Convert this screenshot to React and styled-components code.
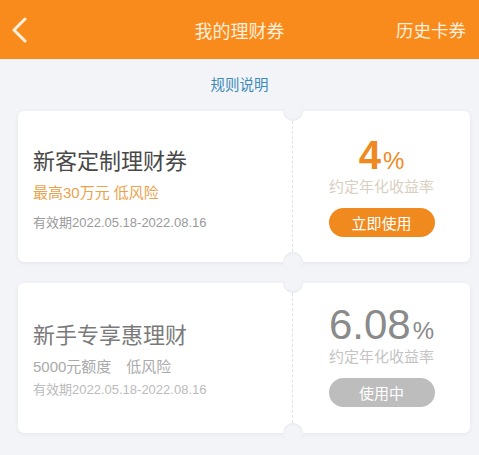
import React from 'react';
import styled, { createGlobalStyle } from 'styled-components';

const GlobalStyle = createGlobalStyle`
	body {
		margin: 0;
		background: #f3f4f8;
		font-family: 'Liberation Sans', 'Noto Sans CJK SC', sans-serif;
	}
`;

const Page = styled.div`
	width: 479px;
	min-height: 455px;
	background: #f3f4f8;
	overflow: hidden;
`;

const Header = styled.header`
	height: 59px;
	background: #f98a1c;
	display: flex;
	align-items: center;
	justify-content: space-between;
	padding: 0 13px 0 10px;
	color: #fdf0dc;
	position: relative;
`;

const Back = styled.button`
	border: 0;
	background: none;
	padding: 0;
	width: 24px;
	height: 30px;
	display: flex;
	align-items: center;
`;

const Title = styled.h1`
	position: absolute;
	left: 0;
	right: 0;
	margin: 0;
	text-align: center;
	font-size: 18px;
	font-weight: 400;
	pointer-events: none;
`;

const HeaderLink = styled.span`
	font-size: 17.5px;
`;

const Rules = styled.div`
	height: 52px;
	line-height: 52px;
	text-align: center;
	color: #3d8bb8;
	font-size: 14.5px;
`;

const List = styled.div`
	display: flex;
	flex-direction: column;
	gap: 21px;
	padding: 0 9px 0 18px;
`;

const Card = styled.div`
	position: relative;
	display: flex;
	height: ${(p) => (p.$dim ? 150 : 151)}px;
	background: #fff;
	border-radius: 6px;
	box-shadow: 0 1px 4px rgba(60, 60, 90, 0.08);
`;

const Notch = styled.span`
	position: absolute;
	left: 265px;
	${(p) => (p.$bottom ? 'bottom: -10px;' : 'top: -10px;')}
	width: 20px;
	height: 20px;
	border-radius: 50%;
	background: #f3f4f8;
	box-shadow: inset 0 ${(p) => (p.$bottom ? '1px' : '-1px')} 2px rgba(60, 60, 90, 0.08);
`;

const Left = styled.div`
	flex: 1;
	padding: ${(p) => (p.$dim ? 35 : 33)}px 0 0 15px;
`;

const Name = styled.div`
	font-size: 22px;
	line-height: 30px;
	color: ${(p) => (p.$dim ? '#7a7a7a' : '#484848')};
	font-family: 'Noto Sans CJK SC', sans-serif;
`;

const Tags = styled.div`
	margin-top: 9px;
	font-size: 15px;
	line-height: 20px;
	color: ${(p) => (p.$dim ? '#aaa' : '#eca24c')};
	white-space: pre;
`;

const Valid = styled.div`
	margin-top: ${(p) => (p.$dim ? 3 : 10)}px;
	font-size: 13px;
	line-height: 20px;
	color: ${(p) => (p.$dim ? '#bbb' : '#9a9a9a')};
`;

const Right = styled.div`
	width: 177px;
	border-left: 1px dashed #e2e2e2;
	margin: 10px 0;
	display: flex;
	flex-direction: column;
	align-items: center;
	padding-top: ${(p) => (p.$dim ? 10 : 12)}px;
`;

const Rate = styled.div`
	line-height: 44px;
	height: 44px;
	color: ${(p) => (p.$dim ? '#8a8a8a' : '#ef8a22')};
	font-size: ${(p) => (p.$dim ? 42 : 40)}px;
	font-weight: ${(p) => (p.$dim ? 400 : 700)};
	font-family: 'Liberation Sans', sans-serif;
`;

const Pct = styled.span`
	font-size: 24px;
	font-weight: 400;
	margin-left: 2px;
`;

const RateLabel = styled.div`
	font-size: 15px;
	line-height: 20px;
	color: ${(p) => (p.$dim ? '#c4c4c4' : '#d9cfc2')};
`;

const Action = styled.button`
	margin-top: 11px;
	width: 106px;
	height: 29px;
	border: 0;
	border-radius: 15px;
	background: ${(p) => (p.$dim ? '#bdbdbd' : '#f08a1e')};
	color: #fff;
	font-size: 15px;
	font-family: inherit;
	padding: 0;
`;

const coupons = [
	{
		name: '新客定制理财券',
		tags: '最高30万元 低风险',
		rate: '4',
		action: '立即使用',
		dim: false,
	},
	{
		name: '新手专享惠理财',
		tags: '5000元额度　低风险',
		rate: '6.08',
		action: '使用中',
		dim: true,
	},
];

export default function App() {
	return (
		<>
			<GlobalStyle />
			<Page>
				<Header>
					<Back aria-label="back">
						<svg width="18" height="26" viewBox="0 0 18 26">
							<path
								d="M15 2 L4 13 L15 24"
								fill="none"
								stroke="#fdf0dc"
								strokeWidth="3"
								strokeLinecap="round"
								strokeLinejoin="round"
							/>
						</svg>
					</Back>
					<Title>我的理财券</Title>
					<HeaderLink>历史卡券</HeaderLink>
				</Header>
				<Rules>规则说明</Rules>
				<List>
					{coupons.map((c) => (
						<Card key={c.name} $dim={c.dim}>
							<Notch />
							<Notch $bottom />
							<Left $dim={c.dim}>
								<Name $dim={c.dim}>{c.name}</Name>
								<Tags $dim={c.dim}>{c.tags}</Tags>
								<Valid $dim={c.dim}>有效期2022.05.18-2022.08.16</Valid>
							</Left>
							<Right $dim={c.dim}>
								<Rate $dim={c.dim}>
									{c.rate}
									<Pct>%</Pct>
								</Rate>
								<RateLabel $dim={c.dim}>约定年化收益率</RateLabel>
								<Action $dim={c.dim}>{c.action}</Action>
							</Right>
						</Card>
					))}
				</List>
			</Page>
		</>
	);
}
